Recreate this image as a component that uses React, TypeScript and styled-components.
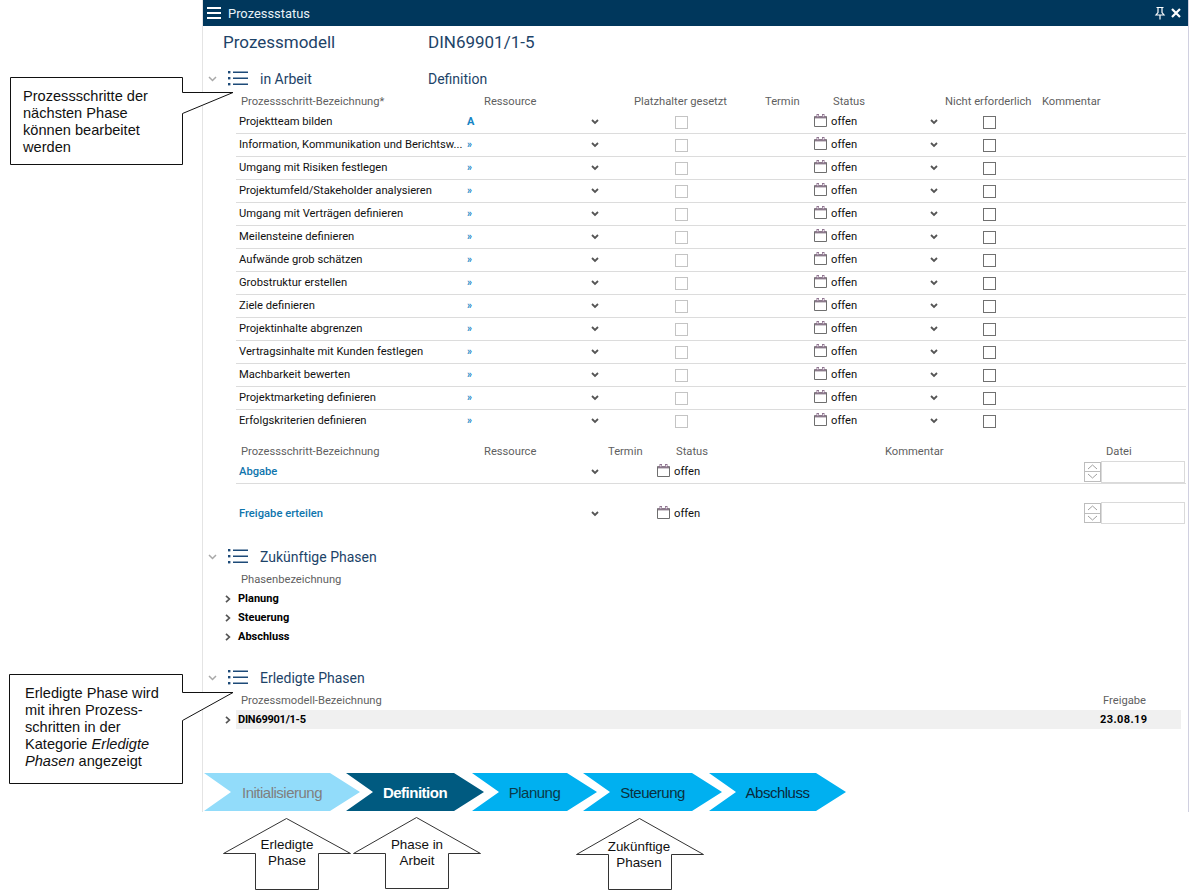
import React from "react";
import styled, { createGlobalStyle } from "styled-components";

const Global = createGlobalStyle`
  html, body { margin: 0; padding: 0; background: #fff; }
  body { font-family: Roboto, "Liberation Sans", sans-serif; }
`;

const Page = styled.div`
  position: relative;
  width: 1189px;
  height: 896px;
  overflow: hidden;
  background: #fff;
`;

const Panel = styled.main`
  margin-left: 202px;
  width: 987px;
  height: 812px;
  box-sizing: border-box;
  border-left: 1px solid #e4e4e4;
  border-right: 1px solid #d0d0e0;
  display: flex;
  flex-direction: column;
`;

const TitleBar = styled.header`
  height: 26px;
  background: #00375c;
  display: flex;
  align-items: center;
  padding: 0 7px 0 4px;
  color: #e8f2f8;
  font-size: 12.9px;
  flex: none;
`;

const TitleText = styled.span`
  margin-left: 7px;
  flex: 1;
`;

const TitleAction = styled.svg`
  display: block;
  margin-left: 5px;
`;

const ModelHead = styled.div`
  display: flex;
  align-items: center;
  height: 32px;
  padding-left: 20px;
  font-size: 17px;
  color: #1d4368;
`;

const ModelLabel = styled.span`
  width: 205px;
`;

const SectionHead = styled.div<{ $top: number }>`
  display: flex;
  align-items: center;
  height: 22px;
  margin-top: ${(p) => p.$top}px;
  padding-left: 5px;
  font-size: 14px;
  color: #1d4368;
  flex: none;
`;

const Collapse = styled.svg`
  display: block;
  width: 9px;
  height: 6px;
  margin-right: 11px;
`;

const ListIcon = styled.svg`
  display: block;
  width: 20px;
  height: 18px;
  margin-right: 12px;
`;

const SectionName = styled.span`
  width: 168px;
`;

const HeaderRow = styled.div<{ $cols: string; $top?: number }>`
  display: grid;
  grid-template-columns: ${(p) => p.$cols};
  align-items: center;
  height: 18px;
  margin-top: ${(p) => p.$top ?? 2}px;
  padding-left: 38px;
  font-size: 11.2px;
  color: #5f5f5f;
  white-space: nowrap;
  flex: none;
`;

const StepList = styled.div`
  margin: 0 2px 0 33px;
  flex: none;
`;

const STEP_COLS = "231px 124px 11px 73px 13px 126px 17px 99px 11px 42px 13px 1fr";

const StepRow = styled.div`
  display: grid;
  grid-template-columns: ${STEP_COLS};
  align-items: center;
  height: 23px;
  box-shadow: 0 1px 0 #dcdcdc;
  font-size: 11.2px;
  color: #111;
  &:last-child { box-shadow: none; }
`;

const StepName = styled.span`
  padding-left: 3px;
  white-space: nowrap;
  overflow: hidden;
`;

const ResourceMark = styled.span<{ $strong?: boolean }>`
  color: #1584c4;
  font-weight: 700;
  font-size: ${(p) => (p.$strong ? 11 : 10)}px;
`;

const Chevron = styled.svg`
  display: block;
  width: 8px;
  height: 6px;
  margin-top: 1px;
`;

const Box = styled.span<{ $muted?: boolean }>`
  display: block;
  width: 13px;
  height: 13px;
  margin-top: 2px;
  box-sizing: border-box;
  background: #fff;
  border: 1px solid ${(p) => (p.$muted ? "#c4c4c4" : "#707070")};
`;

const Calendar = styled.svg`
  display: block;
  width: 13px;
  height: 13px;
  margin-top: -2px;
`;

const DELIVERY_COLS = "231px 124px 11px 55px 17px 410px 1fr";

const DeliveryRow = styled.div<{ $line?: boolean; $top?: number }>`
  display: grid;
  grid-template-columns: ${DELIVERY_COLS};
  align-items: center;
  height: ${(p) => (p.$line ? 24 : 23)}px;
  margin: ${(p) => p.$top ?? 0}px 2px 0 33px;
  box-sizing: border-box;
  border-bottom: 1px solid ${(p) => (p.$line ? "#dcdcdc" : "transparent")};
  font-size: 11.2px;
  color: #111;
  flex: none;
`;

const DeliveryName = styled.span`
  padding-left: 3px;
  color: #0f75ad;
  font-weight: 500;
`;

const FileField = styled.div`
  display: flex;
  align-items: center;
`;

const Spinner = styled.div`
  width: 17px;
  height: 20px;
  display: flex;
  flex-direction: column;
  box-sizing: border-box;
  border: 1px solid #bdbdbd;
`;

const SpinButton = styled.div<{ $down?: boolean }>`
  flex: 1;
  display: flex;
  align-items: center;
  justify-content: center;
  border-top: ${(p) => (p.$down ? "1px solid #bdbdbd" : "none")};
`;

const FileInput = styled.div`
  width: 84px;
  height: 22px;
  box-sizing: border-box;
  border: 1px solid #dadada;
  background: #fff;
`;

const PhaseList = styled.div`
  margin-top: 1px;
  flex: none;
`;

const PhaseRow = styled.div`
  display: flex;
  align-items: center;
  height: 19px;
  padding-left: 22px;
  font-size: 11px;
  font-weight: 700;
  color: #000;
`;

const Expand = styled.svg`
  display: block;
  width: 6px;
  height: 8px;
  margin-right: 7px;
`;

const DoneRow = styled.div`
  display: flex;
  align-items: center;
  height: 19px;
  padding-left: 22px;
  font-size: 11px;
  font-weight: 700;
  color: #000;
  flex: none;
`;

const DoneBand = styled.div`
  width: 945px;
  height: 19px;
  margin-left: -2px;
  padding: 0 0 0 2px;
  box-sizing: border-box;
  display: flex;
  align-items: center;
  justify-content: space-between;
  background: #f0f0f0;
`;

const DoneName = styled.span`
  letter-spacing: -0.25px;
`;

const DoneDate = styled.span`
  width: 81px;
  letter-spacing: 0.4px;
`;

const Steps = styled.nav`
  display: flex;
  margin-top: auto;
  margin-bottom: 1px;
  padding-left: 1px;
`;

const Step = styled.div<{ $w: number; $overlap: number; $bg: string; $fg: string; $bold?: boolean }>`
  width: ${(p) => p.$w}px;
  height: 38px;
  margin-left: ${(p) => -p.$overlap}px;
  background: ${(p) => p.$bg};
  color: ${(p) => p.$fg};
  font: ${(p) => (p.$bold ? 700 : 400)} 15px "Liberation Sans", Arial, sans-serif;
  letter-spacing: -0.5px;
  display: flex;
  align-items: center;
  justify-content: center;
  box-sizing: border-box;
  clip-path: polygon(0 0, calc(100% - 30px) 0, 100% 50%, calc(100% - 30px) 100%, 0 100%, 27px 50%);
`;

const Callout = styled.div<{ $x: number; $y: number; $w: number; $h: number }>`
  position: absolute;
  left: ${(p) => p.$x}px;
  top: ${(p) => p.$y}px;
  width: ${(p) => p.$w}px;
  height: ${(p) => p.$h}px;
  box-sizing: border-box;
  padding: 10px 0 0 13px;
  font: 14.6px/17px "Liberation Sans", Arial, sans-serif;
  color: #111;
  white-space: pre-line;
  z-index: 2;
`;

const ShapeLayer = styled.svg`
  position: absolute;
  left: 0;
  top: 0;
  width: 1189px;
  height: 896px;
  pointer-events: none;
  z-index: 1;
`;

const ArrowLabel = styled.div<{ $x: number; $y: number }>`
  position: absolute;
  left: ${(p) => p.$x}px;
  top: ${(p) => p.$y}px;
  width: 100px;
  transform: translateX(-50%);
  text-align: center;
  font: 13.4px/16px "Liberation Sans", Arial, sans-serif;
  color: #111;
  z-index: 2;
`;

const CalendarIcon = () => (
  <Calendar viewBox="0 0 13 13">
    <path d="M.5 2.5h12v10H.5z" fill="#fff" stroke="#6f6f6f" />
    <path d="M1 2h11v2.4H1z" fill="#8b7a8b" />
    <path d="M2.5 0h2.5v3H2.500zM8 0h2.500v3H8z" fill="#8f7490" />
    <path d="M3.300 1h1v1.500h-1zM8.800 1h1v1.500h-1z" fill="#fff" />
  </Calendar>
);

const DownChevron = () => (
  <Chevron viewBox="0 0 8 6">
    <path d="M1 1l3 3 3-3" fill="none" stroke="#555" strokeWidth="1.8" />
  </Chevron>
);

const ListGlyph = () => (
  <ListIcon viewBox="0 0 20 18">
    <g fill="#1d4a78">
      <rect x="0" y="1" width="2.4" height="2.4" />
      <rect x="0" y="7" width="2.4" height="2.4" />
      <rect x="0" y="13" width="2.4" height="2.4" />
      <rect x="5" y="1.5" width="15" height="1.5" />
      <rect x="5" y="7.5" width="15" height="1.5" />
      <rect x="5" y="13.5" width="15" height="1.5" />
    </g>
  </ListIcon>
);

const CollapseGlyph = () => (
  <Collapse viewBox="0 0 9 6">
    <path d="M1 1l3.5 3.5L8 1" fill="none" stroke="#a8a8a8" strokeWidth="1.5" />
  </Collapse>
);

const ExpandGlyph = () => (
  <Expand viewBox="0 0 6 8">
    <path d="M1 .8L4.4 4 1 7.2" fill="none" stroke="#555" strokeWidth="1.7" />
  </Expand>
);

const SpinnerControl = () => (
  <Spinner>
    <SpinButton>
      <svg width="11" height="6" viewBox="0 0 11 6">
        <path d="M1 5l4.5-4L10 5" fill="none" stroke="#a0a0a0" />
      </svg>
    </SpinButton>
    <SpinButton $down>
      <svg width="11" height="6" viewBox="0 0 11 6">
        <path d="M1 1l4.5 4L10 1" fill="none" stroke="#a0a0a0" />
      </svg>
    </SpinButton>
  </Spinner>
);

const STEPS = [
  "Projektteam bilden",
  "Information, Kommunikation und Berichtsw...",
  "Umgang mit Risiken festlegen",
  "Projektumfeld/Stakeholder analysieren",
  "Umgang mit Verträgen definieren",
  "Meilensteine definieren",
  "Aufwände grob schätzen",
  "Grobstruktur erstellen",
  "Ziele definieren",
  "Projektinhalte abgrenzen",
  "Vertragsinhalte mit Kunden festlegen",
  "Machbarkeit bewerten",
  "Projektmarketing definieren",
  "Erfolgskriterien definieren",
];

const CHEVRONS = [
  { label: "Initialisierung", w: 156, overlap: 0, bg: "#92dcfa", fg: "#7f7f7f" },
  { label: "Definition", w: 138, overlap: 14, bg: "#005a80", fg: "#ffffff", bold: true },
  { label: "Planung", w: 125, overlap: 12, bg: "#00b0f0", fg: "#0a3a4a" },
  { label: "Steuerung", w: 139, overlap: 14, bg: "#00b0f0", fg: "#0a3040" },
  { label: "Abschluss", w: 137, overlap: 13, bg: "#00b0f0", fg: "#0a2a3c" },
];

const arrowPath = (cx: number, top: number, wing: number, bottom: number) =>
  `M${cx} ${top}L${cx + 64} ${wing}H${cx + 32}V${bottom}H${cx - 31}V${wing}H${cx - 63}Z`;

export default function App() {
  return (
    <Page>
      <Global />
      <Panel>
        <TitleBar>
          <svg width="14" height="12" viewBox="0 0 14 12">
            <path d="M0 1h14M0 6h14M0 11h14" stroke="#fff" strokeWidth="2" />
          </svg>
          <TitleText>Prozessstatus</TitleText>
          <TitleAction width="12" height="14" viewBox="0 0 12 14">
            <path d="M2.5 1.5h7M4 1.5v5L2 9h8L8 6.5v-5M6 9v4.5" fill="none" stroke="#fff" strokeWidth="1.2" />
          </TitleAction>
          <TitleAction width="10" height="10" viewBox="0 0 10 10">
            <path d="M1 1l8 8M9 1l-8 8" stroke="#fff" strokeWidth="2.2" />
          </TitleAction>
        </TitleBar>

        <ModelHead>
          <ModelLabel>Prozessmodell</ModelLabel>
          <span>DIN69901/1-5</span>
        </ModelHead>

        <SectionHead $top={10}>
          <CollapseGlyph />
          <ListGlyph />
          <SectionName>in Arbeit</SectionName>
          <span>Definition</span>
        </SectionHead>

        <HeaderRow $cols="243px 150px 131px 68px 112px 97px 1fr">
          <span>Prozessschritt-Bezeichnung*</span>
          <span>Ressource</span>
          <span>Platzhalter gesetzt</span>
          <span>Termin</span>
          <span>Status</span>
          <span>Nicht erforderlich</span>
          <span>Kommentar</span>
        </HeaderRow>

        <StepList>
          {STEPS.map((name, i) => (
            <StepRow key={name}>
              <StepName>{name}</StepName>
              <ResourceMark $strong={i === 0}>{i === 0 ? "A" : "»"}</ResourceMark>
              <DownChevron />
              <span />
              <Box $muted />
              <span />
              <CalendarIcon />
              <span>offen</span>
              <DownChevron />
              <span />
              <Box />
              <span />
            </StepRow>
          ))}
        </StepList>

        <HeaderRow $top={10} $cols="243px 124px 68px 209px 221px 1fr">
          <span>Prozessschritt-Bezeichnung</span>
          <span>Ressource</span>
          <span>Termin</span>
          <span>Status</span>
          <span>Kommentar</span>
          <span>Datei</span>
        </HeaderRow>

        <DeliveryRow $line>
          <DeliveryName>Abgabe</DeliveryName>
          <span />
          <DownChevron />
          <span />
          <CalendarIcon />
          <span>offen</span>
          <FileField>
            <SpinnerControl />
            <FileInput />
          </FileField>
        </DeliveryRow>

        <DeliveryRow $top={18}>
          <DeliveryName>Freigabe erteilen</DeliveryName>
          <span />
          <DownChevron />
          <span />
          <CalendarIcon />
          <span>offen</span>
          <FileField>
            <SpinnerControl />
            <FileInput />
          </FileField>
        </DeliveryRow>

        <SectionHead $top={21}>
          <CollapseGlyph />
          <ListGlyph />
          <SectionName>Zukünftige Phasen</SectionName>
        </SectionHead>

        <HeaderRow $cols="1fr">
          <span>Phasenbezeichnung</span>
        </HeaderRow>

        <PhaseList>
          {["Planung", "Steuerung", "Abschluss"].map((p) => (
            <PhaseRow key={p}>
              <ExpandGlyph />
              {p}
            </PhaseRow>
          ))}
        </PhaseList>

        <SectionHead $top={21}>
          <CollapseGlyph />
          <ListGlyph />
          <SectionName>Erledigte Phasen</SectionName>
        </SectionHead>

        <HeaderRow $cols="862px 1fr">
          <span>Prozessmodell-Bezeichnung</span>
          <span>Freigabe</span>
        </HeaderRow>

        <PhaseList>
          <DoneRow>
            <ExpandGlyph />
            <DoneBand>
              <DoneName>DIN69901/1-5</DoneName>
              <DoneDate>23.08.19</DoneDate>
            </DoneBand>
          </DoneRow>
        </PhaseList>

        <Steps>
          {CHEVRONS.map((c) => (
            <Step key={c.label} $w={c.w} $overlap={c.overlap} $bg={c.bg} $fg={c.fg} $bold={c.bold}>
              {c.label}
            </Step>
          ))}
        </Steps>
      </Panel>

      <ShapeLayer viewBox="0 0 1189 896">
        <g fill="#fff" stroke="#111" strokeWidth="1">
          <path d="M10.5 77.5H182.5V92.5L233 92.5L182.5 113.5V164.5H10.5Z" />
          <path d="M9.5 674.5H182.5V692.5L233 692.5L182.5 720.5V783.5H9.5Z" />
        </g>
        <g fill="#fff" stroke="#333" strokeWidth="1">
          <path d={arrowPath(286.5, 818.5, 853.5, 889.5)} />
          <path d={arrowPath(416.5, 817.5, 853.5, 888.5)} />
          <path d={arrowPath(639.5, 818.5, 854.5, 889.5)} />
        </g>
      </ShapeLayer>

      <Callout $x={10} $y={78} $w={172} $h={86}>
        {"Prozessschritte der\nnächsten Phase\nkönnen bearbeitet\nwerden"}
      </Callout>
      <Callout $x={12} $y={675} $w={170} $h={108}>
        {"Erledigte Phase wird\nmit ihren Prozess-\nschritten in der\nKategorie "}
        <em>Erledigte</em>
        {"\n"}
        <em>Phasen</em> angezeigt
      </Callout>

      <ArrowLabel $x={287} $y={837}>Erledigte<br />Phase</ArrowLabel>
      <ArrowLabel $x={417} $y={837}>Phase in<br />Arbeit</ArrowLabel>
      <ArrowLabel $x={639} $y={839}>Zukünftige<br />Phasen</ArrowLabel>
    </Page>
  );
}
